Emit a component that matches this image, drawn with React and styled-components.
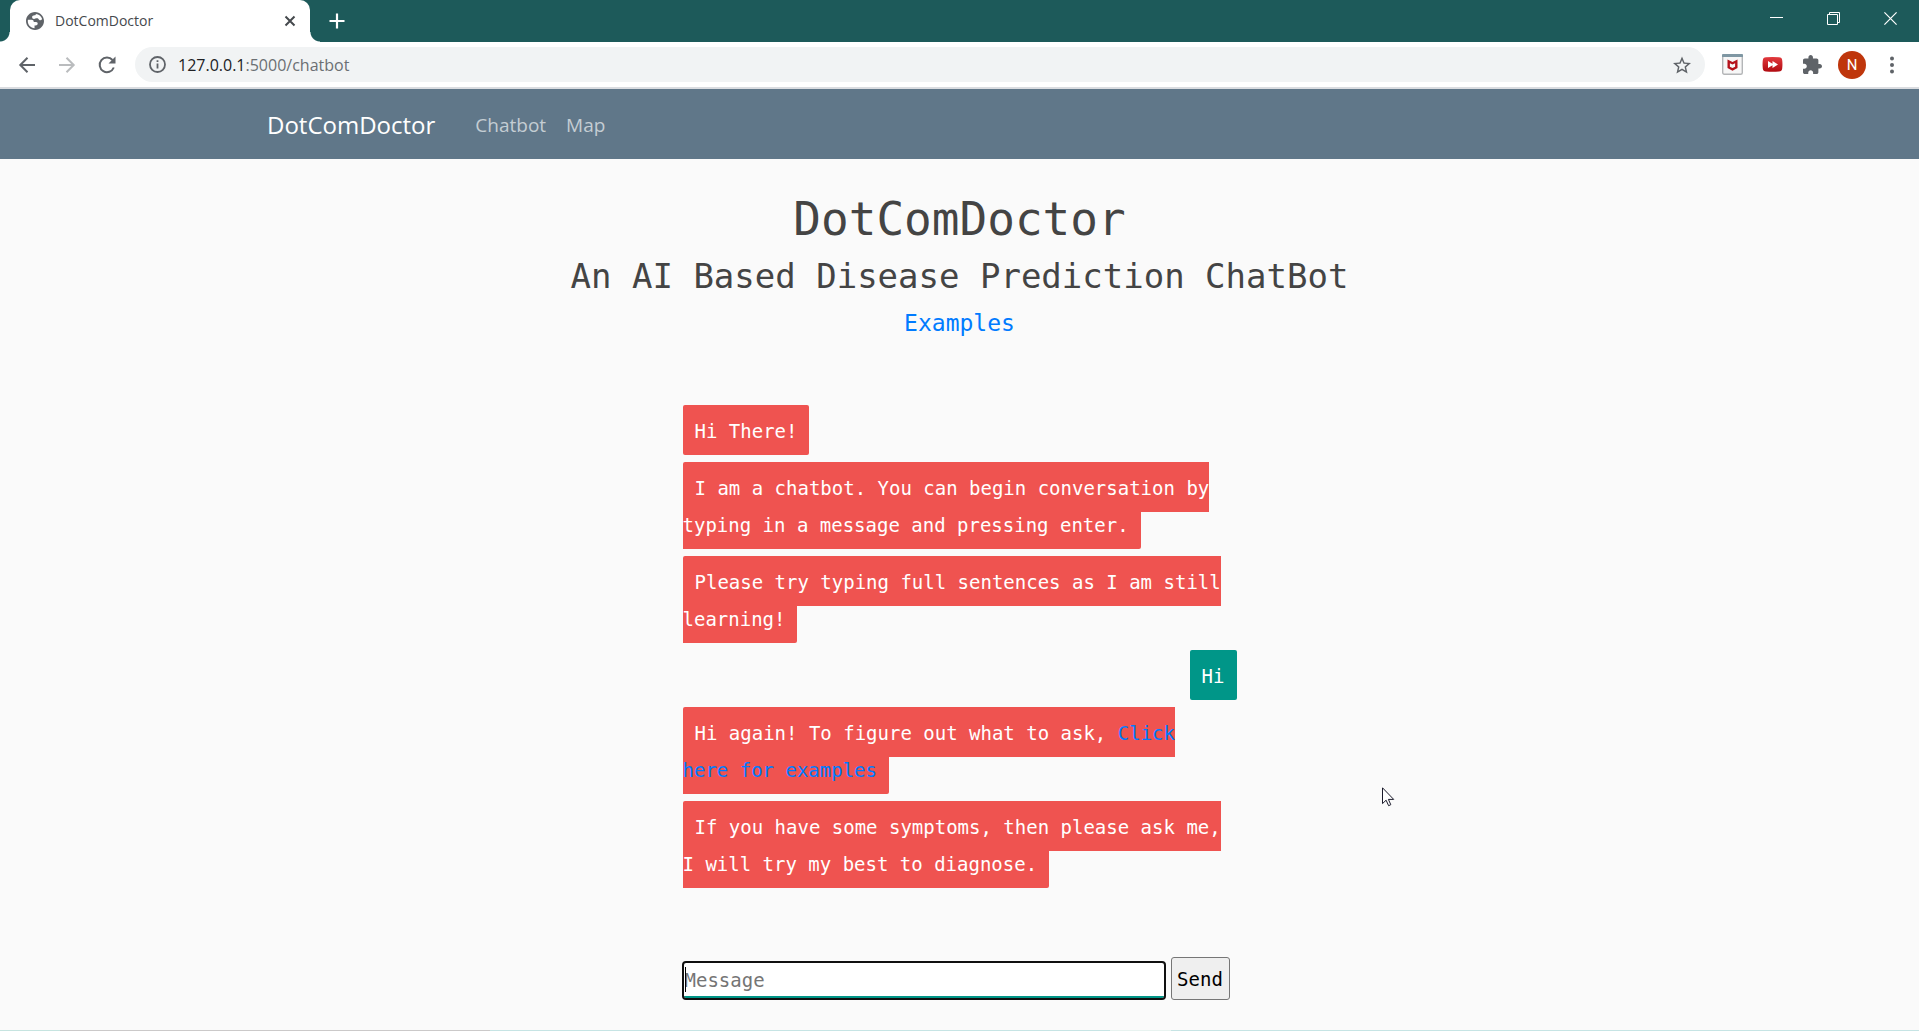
import React from "react";
import styled, { createGlobalStyle, css } from "styled-components";

const ui = '"Open Sans", "Noto Sans", sans-serif';
const mono = '"DejaVu Sans Mono", "Liberation Mono", monospace';

const GlobalStyle = createGlobalStyle`
  *, *::before, *::after { box-sizing: border-box; }
  body { margin: 0; background: #fafafa; font-family: ${mono}; }
  button { font: inherit; border: 0; padding: 0; background: none; color: inherit; }
  h1, h2, h3, p { margin: 0; font-weight: 400; }
  a { text-decoration: none; }
  svg { display: block; flex: none; }
`;

const Screen = styled.div`
  min-height: 100vh;
  display: flex;
  flex-direction: column;
`;

const TabStrip = styled.header`
  display: flex;
  height: 42px;
  padding-left: 10px;
  background: #1d5a5a;
  color: #fff;
`;

const Tab = styled.div`
  position: relative;
  display: flex;
  align-items: center;
  gap: 11px;
  width: 300px;
  padding: 0 14px 0 16px;
  border-radius: 10px 10px 0 0;
  background: #fff;
  color: #45494d;
  font: 14px/20px ${ui};

  &::before,
  &::after {
    content: "";
    position: absolute;
    bottom: 0;
    width: 10px;
    height: 10px;
  }
  &::before { right: 100%; background: radial-gradient(circle at 0 0, transparent 9px, #fff 10px); }
  &::after { left: 100%; background: radial-gradient(circle at 100% 0, transparent 9px, #fff 10px); }
`;

const TabTitle = styled.span`flex: 1;`;

const NewTab = styled.button`
  display: grid;
  place-items: center;
  width: 54px;
`;

const WindowButtons = styled.div`
  display: flex;
  margin-left: auto;
`;

const WindowButton = styled.button`
  display: grid;
  place-items: center;
  width: 57px;
  height: 37px;
`;

const Toolbar = styled.div`
  display: flex;
  align-items: center;
  height: 47px;
  padding: 0 7px 0 7px;
  border-bottom: 2px solid #dadce0;
  background: #fff;
  color: #5f6368;
`;

const ToolButton = styled.button`
  display: grid;
  place-items: center;
  width: 40px;
  height: 35px;
  color: ${(p) => (p.$faded ? "#babcbe" : "inherit")};
`;

const Address = styled.div`
  flex: 1;
  display: flex;
  align-items: center;
  gap: 12px;
  height: 35px;
  margin: 0 7px 0 8px;
  padding: 0 14px;
  border-radius: 18px;
  background: #f1f3f4;
  font: 16px/24px ${ui};
`;

const Url = styled.span`
  flex: 1;
  color: #6b6f73;
  b { font-weight: 400; color: #202124; }
`;

const Avatar = styled.span`
  display: grid;
  place-items: center;
  width: 28px;
  height: 28px;
  border-radius: 50%;
  background: #bf360c;
  color: #fff;
  font: 15px/28px Roboto, sans-serif;
`;

const NavBar = styled.nav`
  height: 70px;
  padding-top: 2px;
  background: #607789;
  font-family: ${ui};
`;

const NavInner = styled.div`
  display: flex;
  align-items: center;
  gap: 20px;
  height: 100%;
  max-width: 1385px;
  margin: 0 auto;
`;

const Brand = styled.a`
  margin-right: 20px;
  color: #fff;
  font-size: 24px;
  line-height: 36px;
`;

const NavLink = styled.a`
  color: #c4cdd3;
  font-size: 19px;
  line-height: 30px;
`;

const Main = styled.main`
  flex: 1;
  display: flex;
  flex-direction: column;
  align-items: center;
  padding: 30px 20px 20px;
`;

const Title = styled.h1`
  color: #444;
  font-size: 46px;
  line-height: 60px;
`;

const Subtitle = styled.h2`
  margin-top: 7px;
  color: #444;
  font-size: 34px;
  line-height: 40px;
`;

const Examples = styled.h3`
  margin-top: 9px;
  font-size: 23px;
  line-height: 36px;
`;

const Link = styled.a`color: #007bff;`;

const Chat = styled.section`
  width: 100%;
  max-width: 554px;
  margin-top: 72px;
  color: #fff;
  font-size: 19px;
  line-height: 37px;
`;

const Message = styled.p`
  margin-bottom: 20px;
  ${(p) => p.$user ? css`text-align: right;` : css`padding-right: 12px;`}
`;

const Bubble = styled.span`
  padding: 15px 12px 13px;
  border-radius: 2px;
  background: ${(p) => (p.$user ? "#009688" : "#ef5350")};
`;

const Composer = styled.form`
  display: flex;
  align-items: flex-end;
  gap: 7px;
  width: 100%;
  max-width: 554px;
  margin-top: 54px;
  font-size: 19px;
`;

const Field = styled.label`
  position: relative;
  width: 480px;
  margin: 0 0 2px 1px;
`;

const Caret = styled.span`
  position: absolute;
  left: 1px;
  top: 4px;
  width: 1px;
  height: 25px;
  background: #000;
`;

const Input = styled.input`
  display: block;
  width: 100%;
  height: 35px;
  padding: 0 1px;
  border: 0;
  border-bottom: 2px solid #009688;
  outline: 2px solid #101010;
  border-radius: 2px;
  background: #fff;
  font: inherit;
  &::placeholder { color: #757575; opacity: 1; }
`;

const Send = styled.button`
  && {
    width: 59px;
    height: 43px;
    border: 1px solid #767676;
    border-radius: 3px;
    background: #efefef;
    color: #000;
  }
`;

const BottomEdge = styled.footer`
  height: 1px;
  background: linear-gradient(
    to right,
    #c6e4e0 60px,
    #cbc9c9 60px 490px,
    #c6e4e4 490px 1110px,
    #e8f3f0 1110px 1171px,
    #c6e4e4 1171px
  );
`;

const Pointer = styled.div`
  position: absolute;
  left: 1382px;
  top: 787px;
`;

const stroke = { fill: "none", stroke: "currentColor" };

const Globe = () => (
  <svg width="18" height="18" viewBox="2 2 20 20" fill="#5f6368">
    <path d="M12 2C6.480 2 2 6.480 2 12s4.480 10 10 10 10-4.480 10-10S17.520 2 12 2zm-.5 18c-4.400-.2-7.500-3.700-7.500-8 0-.5.1-1 .2-1.400H8c1.800 0 2.600.9 2.600 2.400h2.600c1.300 0 1.800.8 1.800 1.900 0 1.500-1 2.100-2.400 2.100h-1.100zm3.900-.8c2.700-1.300 4.600-4 4.600-7.200 0-.6-.1-1.200-.2-1.800-.9 1-2.300 1.300-3.300.3-.6-.7-.9-1.500-2.400-1.500-1.500 0-2 .8-3.200.8-1.500 0-2.100-1-2.100-2.200 0-1.500 1.300-1.800 2.700-2 1.100-.1 1.400-.6 1.500-1.500 3.300.2 6 2.500 6.800 5.500" />
  </svg>
);

const Puzzle = () => (
  <svg width="19" height="19" viewBox="2 1 21 21" fill="currentColor">
    <path d="M20.500 11H19V7c0-1.100-.9-2-2-2h-4V3.500C13 2.120 11.880 1 10.500 1S8 2.120 8 3.500V5H4c-1.100 0-1.990.9-1.990 2v3.800H3.500c1.490 0 2.700 1.210 2.700 2.700s-1.210 2.700-2.700 2.700H2V20c0 1.100.9 2 2 2h3.800v-1.500c0-1.490 1.210-2.700 2.700-2.700 1.490 0 2.700 1.210 2.700 2.700V22H17c1.100 0 2-.9 2-2v-4h1.500c1.380 0 2.500-1.120 2.500-2.500S21.880 11 20.500 11z" />
  </svg>
);

export default function App() {
  return (
    <>
      <GlobalStyle />
      <Screen>
        <TabStrip>
          <Tab>
            <Globe />
            <TabTitle>DotComDoctor</TabTitle>
            <button aria-label="Close tab">
              <svg width="12" height="12" viewBox="0 0 12 12" {...stroke} strokeWidth="2"><path d="M1.500 1.500l9 9M10.500 1.500l-9 9" /></svg>
            </button>
          </Tab>
          <NewTab aria-label="New tab">
            <svg width="16" height="16" viewBox="0 0 16 16" {...stroke} strokeWidth="2.200"><path d="M8 .5v15M.5 8h15" /></svg>
          </NewTab>
          <WindowButtons>
            <WindowButton aria-label="Minimize">
              <svg width="13" height="13" viewBox="0 0 13 13" {...stroke}><path d="M0 5.500h13" /></svg>
            </WindowButton>
            <WindowButton aria-label="Restore">
              <svg width="13" height="13" viewBox="0 0 13 13" {...stroke}><path d="M.5 2.500h10v10H.5zM2.500 2.500v-2h10v10h-2" /></svg>
            </WindowButton>
            <WindowButton aria-label="Close">
              <svg width="13" height="13" viewBox="0 0 13 13" {...stroke} strokeWidth="1.200"><path d="M.4.4l12.200 12.200M12.600.4L.4 12.600" /></svg>
            </WindowButton>
          </WindowButtons>
        </TabStrip>
        <Toolbar>
          <ToolButton aria-label="Back">
            <svg width="18" height="18" viewBox="0 0 18 18" {...stroke} strokeWidth="2"><path d="M17 9H2.500M9.500 1.800L2.300 9l7.200 7.200" /></svg>
          </ToolButton>
          <ToolButton aria-label="Forward" $faded>
            <svg width="18" height="18" viewBox="0 0 18 18" {...stroke} strokeWidth="2"><path d="M1 9h14.500M8.500 1.800L15.700 9l-7.200 7.200" /></svg>
          </ToolButton>
          <ToolButton aria-label="Reload">
            <svg width="18" height="18" viewBox="0 0 18 18" {...stroke} strokeWidth="2"><path d="M15.800 11.500A7.300 7.300 0 1 1 14.500 4" /><path d="M17.500.5v7h-7z" fill="currentColor" stroke="none" /></svg>
          </ToolButton>
          <Address>
            <svg width="17" height="17" viewBox="0 0 17 17" {...stroke} strokeWidth="1.800"><circle cx="8.500" cy="8.500" r="7.500" /><path d="M8.500 7.500v5M8.500 4.300v1.800" /></svg>
            <Url><b>127.0.0.1</b>:5000/chatbot</Url>
            <svg width="18" height="18" viewBox="2 2 20 19" fill="currentColor"><path d="M22 9.240l-7.190-.62L12 2 9.190 8.630 2 9.240l5.460 4.730L5.820 21 12 17.270 18.180 21l-1.630-7.030L22 9.240zM12 15.400l-3.760 2.270 1-4.280-3.320-2.880 4.380-.38L12 6.100l1.710 4.040 4.380.38-3.320 2.880 1 4.280L12 15.400z" /></svg>
          </Address>
          <ToolButton aria-label="McAfee WebAdvisor">
            <svg width="21" height="21" viewBox="0 0 21 21"><rect x=".7" y=".7" width="19.600" height="19.600" rx="1.500" fill="#f7f7f7" stroke="#b4b6b8" strokeWidth="1.400" /><path d="M0 1q0-1 1-1h19q1 0 1 1v2H0z" fill="#7f97a3" /><path d="M5.500 5.500l5 2.500 5-2.500v8.500l-5 2.800-5-2.800zM7.900 9.200v3.500l2.600 1.400 2.600-1.400V9.200l-2.600 1.200z" fill="#b5121b" fillRule="evenodd" /></svg>
          </ToolButton>
          <ToolButton aria-label="Skip ads">
            <svg width="21" height="21" viewBox="0 0 21 21">
              <defs><linearGradient id="skip" x1="0" y1="0" x2="0" y2="1"><stop offset="0" stopColor="#e23a3e" /><stop offset="1" stopColor="#b00a10" /></linearGradient></defs>
              <path d="M4 3.300q6.500-.7 13 0 3 .2 3.200 3 .5 4 0 8.200-.3 2.800-3.200 3-6.500.7-13 0-2.900-.2-3.200-3-.5-4.200 0-8.200.2-2.800 3.200-3z" fill="url(#skip)" />
              <path d="M6 7l4.500 2.800V7l5.500 3.500-5.500 3.500v-2.800L6 14z" fill="#fff" />
            </svg>
          </ToolButton>
          <ToolButton aria-label="Extensions"><Puzzle /></ToolButton>
          <ToolButton aria-label="Profile"><Avatar>N</Avatar></ToolButton>
          <ToolButton aria-label="Menu">
            <svg width="4" height="18" viewBox="0 0 4 18" fill="currentColor"><circle cx="2" cy="2.500" r="2" /><circle cx="2" cy="9" r="2" /><circle cx="2" cy="15.500" r="2" /></svg>
          </ToolButton>
        </Toolbar>
        <NavBar>
          <NavInner>
            <Brand href="#home">DotComDoctor</Brand>
            <NavLink href="#chatbot">Chatbot</NavLink>
            <NavLink href="#map">Map</NavLink>
          </NavInner>
        </NavBar>
        <Main>
          <Title>DotComDoctor</Title>
          <Subtitle>An AI Based Disease Prediction ChatBot</Subtitle>
          <Examples><Link href="#examples">Examples</Link></Examples>
          <Chat>
            <Message><Bubble>Hi There!</Bubble></Message>
            <Message><Bubble>I am a chatbot. You can begin conversation by typing in a message and pressing enter.</Bubble></Message>
            <Message><Bubble>Please try typing full sentences as I am still learning!</Bubble></Message>
            <Message $user><Bubble $user>Hi</Bubble></Message>
            <Message><Bubble>Hi again! To figure out what to ask, <Link href="#examples">Click here for examples</Link></Bubble></Message>
            <Message><Bubble>If you have some symptoms, then please ask me, I will try my best to diagnose.</Bubble></Message>
          </Chat>
          <Composer onSubmit={(e) => e.preventDefault()}>
            <Field>
              <Input type="text" aria-label="Message" placeholder="Message" />
              <Caret />
            </Field>
            <Send type="submit">Send</Send>
          </Composer>
        </Main>
        <BottomEdge />
      </Screen>
      <Pointer>
        <svg width="13" height="20" viewBox="0 0 13 20" fill="#fff" stroke="#1a1a2a"><path d="M.5.8v15.800l3.600-3.400 2.500 5.500 2.200-1-2.400-5.300h5.300z" /></svg>
      </Pointer>
    </>
  );
}
